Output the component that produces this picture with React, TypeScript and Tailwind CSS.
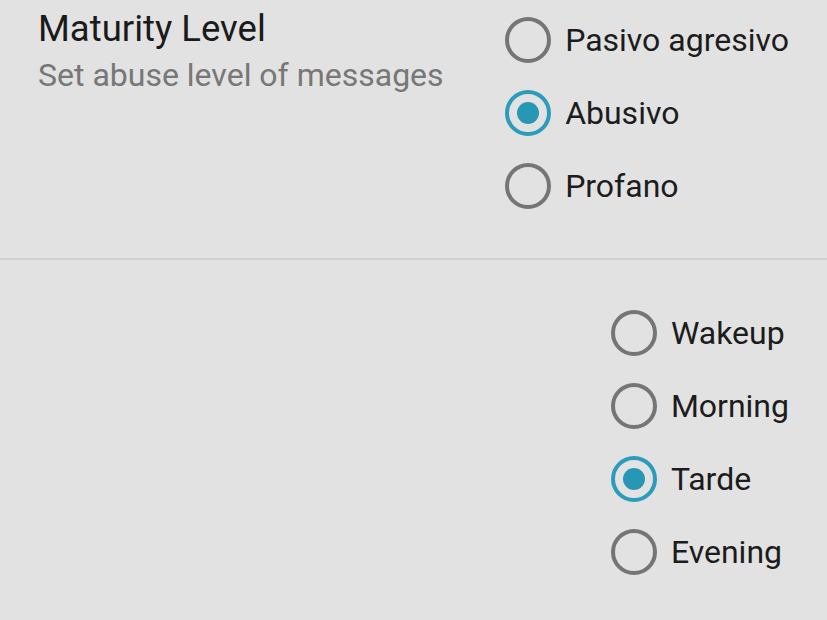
const levels = ["Pasivo agresivo", "Abusivo", "Profano"];
const times = ["Wakeup", "Morning", "Tarde", "Evening"];

// ── Radio row
const Radio = ({ label, checked }: { label: string; checked: boolean }) => (
  <div className="flex items-center h-[73px] gap-[14px]">
    <div
      className={`w-[46px] h-[46px] rounded-full border-[4px] flex items-center justify-center shrink-0 ${
        checked ? "border-[#2b9cbb]" : "border-[#757575]"
      }`}
    >
      {checked && <div className="w-[22px] h-[22px] rounded-full bg-[#2897b6]" />}
    </div>
    <span className="text-[32px] leading-none text-[#1c1c1c]">{label}</span>
  </div>
);

export default function App() {
  return (
    <div
      className="w-[827px] h-[620px] bg-[#e2e2e2] overflow-hidden"
      style={{ fontFamily: "Roboto, 'Liberation Sans', sans-serif" }}
    >
      {/* ── Maturity level */}
      <div className="flex justify-between items-start pl-[38px] pr-[38px] pt-[3px] pb-[36px]">
        <div className="pt-[6px]">
          <h1 className="text-[36.5px] leading-[40px] text-[#1a1a1a]">Maturity Level</h1>
          <p className="mt-[8px] text-[32px] leading-[36px] text-[#777777]">
            Set abuse level of messages
          </p>
        </div>
        <div className="flex flex-col">
          {levels.map((l) => (
            <Radio key={l} label={l} checked={l === "Abusivo"} />
          ))}
        </div>
      </div>

      <div className="h-[2px] bg-[#d0d0d0]" />

      {/* ── Time of day */}
      <div className="flex justify-end pr-[38px] pt-[36px]">
        <div className="flex flex-col">
          {times.map((t) => (
            <Radio key={t} label={t} checked={t === "Tarde"} />
          ))}
        </div>
      </div>
    </div>
  );
}
